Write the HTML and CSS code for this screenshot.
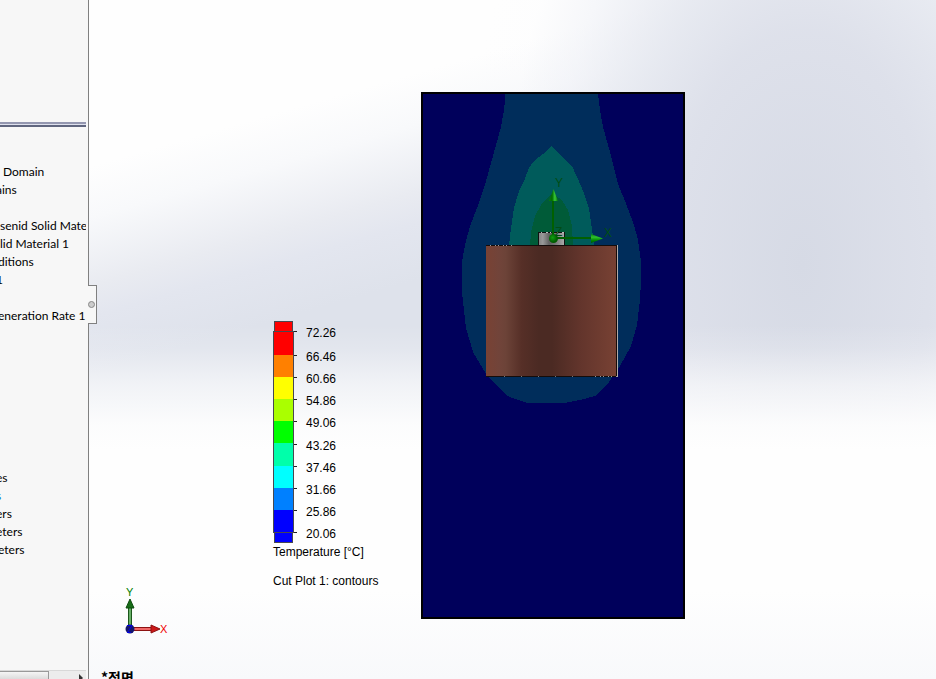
FILE: index.html
```html
<!DOCTYPE html>
<html lang="ko">
<head>
<meta charset="utf-8">
<title>Cut Plot 1</title>
<link rel="stylesheet" href="styles.css">
</head>
<body>
<aside class="panel">
  <div class="panel-top"></div>
  <div class="splitter"></div>
  <ul class="tree">
    <li class="after-space">Domain</li>
    <li class="cut">ains</li>
    <li></li>
    <li>senid Solid Mate</li>
    <li>lid Material 1</li>
    <li class="nudge">ditions</li>
    <li class="cut">1</li>
    <li></li>
    <li class="nudge">eneration Rate 1</li>
    <li></li><li></li><li></li><li></li><li></li><li></li><li></li><li></li>
    <li class="cut">es</li>
    <li class="cut link">s</li>
    <li class="cut">ers</li>
    <li class="cut">eters</li>
    <li class="nudge">eters</li>
  </ul>
  <div class="scrollbar">
    <div class="thumb"></div>
    <svg class="arrow" width="5" height="8" viewBox="0 0 5 8"><path d="M0 0L4 4L0 8Z" fill="#333"/></svg>
  </div>
</aside>
<main class="view">
  <button class="handle" type="button" aria-label="Collapse panel"><span class="dot"></span></button>

  <section class="legend">
    <div class="scale">
      <div class="bar">
        <div class="cap hot"></div>
        <div class="bands">
          <div class="band tall red"></div>
          <div class="band orange"></div>
          <div class="band yellow"></div>
          <div class="band lime"></div>
          <div class="band green"></div>
          <div class="band tall mint"></div>
          <div class="band cyan"></div>
          <div class="band azure"></div>
          <div class="band blue"></div>
        </div>
        <div class="cap cold"></div>
      </div>
      <ol class="values">
        <li class="first">72.26</li>
        <li>66.46</li>
        <li>60.66</li>
        <li>54.86</li>
        <li>49.06</li>
        <li class="spaced">43.26</li>
        <li>37.46</li>
        <li>31.66</li>
        <li>25.86</li>
        <li>20.06</li>
      </ol>
    </div>
    <p>Temperature [°C]</p>
    <p class="plot-name">Cut Plot 1: contours</p>
  </section>

  <svg class="plot" width="264" height="527" viewBox="421 92 264 527">
    <defs>
      <linearGradient id="copper">
        <stop offset="0" stop-color="#794234"/>
        <stop offset=".1" stop-color="#71443a"/>
        <stop offset=".15" stop-color="#6c4338"/>
        <stop offset=".27" stop-color="#562f27"/>
        <stop offset=".4" stop-color="#4b2a23"/>
        <stop offset=".5" stop-color="#4b2a23"/>
        <stop offset=".72" stop-color="#63352c"/>
        <stop offset="1" stop-color="#794234"/>
      </linearGradient>
      <linearGradient id="steel">
        <stop offset="0" stop-color="#858585"/>
        <stop offset=".15" stop-color="#999"/>
        <stop offset=".4" stop-color="#626262"/>
        <stop offset=".6" stop-color="#707070"/>
        <stop offset="1" stop-color="#aaa"/>
      </linearGradient>
      <linearGradient id="coneY">
        <stop offset="0" stop-color="#0a7d0a"/>
        <stop offset=".35" stop-color="#006a00"/>
        <stop offset=".65" stop-color="#38c838"/>
        <stop offset="1" stop-color="#087008"/>
      </linearGradient>
      <linearGradient id="coneX" x2="0" y2="1">
        <stop offset="0" stop-color="#078007"/>
        <stop offset=".35" stop-color="#30c030"/>
        <stop offset=".7" stop-color="#008a00"/>
        <stop offset="1" stop-color="#005500"/>
      </linearGradient>
      <radialGradient id="ball" cx=".4" cy=".4">
        <stop offset="0" stop-color="#10a010"/>
        <stop offset="1" stop-color="#005c00"/>
      </radialGradient>
    </defs>
    <rect x="422" y="93" width="262" height="525" fill="#00005b"/>
    <g shape-rendering="crispEdges">
      <path fill="#002d5b" d="M505.500 94H598L600 110L603 127L610 152L618 184L625 201L631 217L634 225L638 240L641 262V280L640 300L637 325L631 346L620 366L609 382L595 396L580 400L564 403H528L507 396L486 374L473 352L466 328L464 310L462 293V262L463 256L466 241L470 226L479 203L486 181L501 127L504 110Z"/>
      <path fill="#005b5b" d="M551.500 146L561 156L572 166L577 177L584 193L589 209L592 229L594 246H509L511 228L514 208L519 191L524 181L529 168L534 161L543 154Z"/>
      <path fill="#005b38" d="M530 246L531 232L535 216L541 205L548 197L553 194L562 200L568 210L572 226L573 246Z"/>
      <rect x="538" y="232" width="27" height="14" fill="#111"/>
      <rect x="539" y="233" width="25" height="13" fill="url(#steel)"/>
      <path d="M541 232.500H565" stroke="#bbb" stroke-dasharray="1 4 2 2 1 6"/>
      <rect x="486" y="245" width="132" height="132" fill="url(#copper)"/>
      <path d="M486 245.500H617M486 376.500H617M616.500 246V377" stroke="#150c0a"/>
      <path d="M617.500 245V377" stroke="#b0aaa8"/>
      <path d="M490 245.500H514M595 376.500H618" stroke="#999" stroke-dasharray="1 4 1 2"/>
      <path d="M504 376.500H576" stroke="#777" stroke-dasharray="1 16"/>
    </g>
    <rect x="422" y="93" width="262" height="525" fill="none" stroke="#000" stroke-width="2"/>
    <path d="M553 200V239M553 238H592" stroke="#006000" stroke-width="2"/>
    <path d="M553.500 189L558 201L549 201Z" fill="url(#coneY)"/>
    <path d="M603 238.500L591 234V243Z" fill="url(#coneX)"/>
    <circle cx="553.500" cy="238.500" r="4.500" fill="url(#ball)"/>
    <g class="axis-label" fill="#004d14">
      <text x="555" y="187">Y</text>
      <text x="604" y="237">X</text>
      <text x="555" y="236">Z</text>
    </g>
  </svg>

  <svg class="triad" width="50" height="54" viewBox="120 584 50 54">
    <rect x="128" y="606" width="4" height="22" fill="#1b571b"/>
    <rect x="129" y="606" width="2" height="22" fill="#68b068"/>
    <rect x="132" y="627" width="20" height="4" fill="#8c1212"/>
    <rect x="132" y="628" width="20" height="2" fill="#f06868"/>
    <path d="M130 599L134 608H126Z" fill="#176d17" stroke="#0d4a0d"/>
    <path d="M160 629L151 625V633Z" fill="#cc1818" stroke="#8c1212"/>
    <circle cx="130" cy="629" r="4.500" fill="#15156e"/>
    <path d="M127 625.500H132L127.500 632.500H131" fill="none" stroke="#0000e8"/>
    <g class="triad-label">
      <text x="126" y="596" fill="#008000">Y</text>
      <text x="160" y="633" fill="#f00000">X</text>
    </g>
  </svg>
  <div class="view-name">*정면</div>
</main>
</body>
</html>
```
FILE: styles.css
```css
* { box-sizing: border-box; }

body {
  margin: 0;
  height: 100vh;
  display: flex;
  overflow: hidden;
  color: #000;
  font: 12px/18px "Liberation Sans", Arial, sans-serif;
}

ul, ol, p { margin: 0; padding: 0; list-style: none; }

.panel {
  flex: 0 0 89px;
  display: flex;
  flex-direction: column;
  padding-right: 2px;
  border-right: 1px solid #808080;
  background: #f7f7f7;
  overflow: hidden;
}
.panel-top { flex: 0 0 122px; }
.splitter {
  flex: 0 0 5px;
  border-top: 2px solid #9497b0;
  border-bottom: 2px solid #60667f;
  background: #dfe1ee;
}
.tree {
  flex: 1;
  padding-top: 36px;
  overflow: hidden;
  font-family: Lato, "Open Sans", sans-serif;
}
.tree li { height: 18px; white-space: nowrap; }
.tree .after-space { padding-left: 3px; }
.tree .nudge { margin-left: -2px; }
.tree .cut { margin-left: -4px; }
.tree .link { color: #0078d0; }

.scrollbar {
  flex: 0 0 9px;
  display: flex;
  justify-content: space-between;
  background: #ececec;
  border-top: 1px solid #d8d8d8;
  overflow: hidden;
}
.thumb {
  width: 49px;
  border: 1px solid #999;
  border-width: 1px 1px 0 0;
  background: linear-gradient(#f5f5f5, #dcdcdc);
}
.arrow { margin: 3px 2px 0 0; }

.view {
  flex: 1;
  position: relative;
  background:
    linear-gradient(rgba(254, 254, 254, 0) 325px, rgba(254, 254, 254, .15) 348px, rgba(254, 254, 254, .6) 385px, rgba(254, 254, 254, .93) 425px, #fefefe 450px, #fefefe 590px, #f8f9fb 100%),
    radial-gradient(ellipse 340px 620px at 713px 265px, #d6dae5, rgba(221, 224, 234, .95) 38%, rgba(228, 231, 239, .85) 54%, rgba(238, 240, 246, .5) 74%, rgba(250, 250, 252, .15) 88%, rgba(254, 254, 254, 0)),
    linear-gradient(164deg, #fefefe 160px, #f8f9fb 210px, #e9ebf1 275px, #e3e6ef 305px, #dee2eb 360px);
}

.handle {
  position: absolute;
  left: -1px;
  top: 285px;
  width: 9px;
  height: 39px;
  padding: 0;
  display: flex;
  align-items: center;
  border: 1px solid #808080;
  border-left: 0;
  background: #f7f7f7;
}
.dot {
  width: 7px;
  height: 7px;
  border: 1px solid #888;
  border-radius: 50%;
  background: #ccc;
}

.legend { position: absolute; left: 184px; top: 321px; line-height: 16px; }
.scale { display: flex; height: 223px; }
.bar { width: 21px; }
.cap { height: 10px; margin: 0 1px; border: 1px solid #484850; }
.hot { background: #f00; border-bottom: 0; }
.cold { background: #00f; border-top: 0; }
.bands { border: 1px solid #484850; }
.band { height: 22px; }
.band.tall { height: 23px; }
.red { background: #f00; }
.orange { background: #ff8000; }
.yellow { background: #ff0; }
.lime { background: #af0; }
.green { background: #0f0; }
.mint { background: #00ffaa; }
.cyan { background: #0ff; }
.azure { background: #0080ff; }
.blue { background: #00f; }

.values { padding-top: 1px; }
.values li { height: 22px; display: flex; align-items: center; }
.values .first { margin-bottom: 2px; }
.values .spaced { margin-top: 1px; }
.values li::before {
  content: "";
  width: 3px;
  height: 1px;
  margin: 0 9px 3px 0;
  background: #222;
}
.plot-name { margin-top: 13px; }

.plot { position: absolute; left: 332px; top: 92px; }
.axis-label { font-size: 12px; }
.triad { position: absolute; left: 31px; top: 584px; }
.triad-label { font-size: 11px; }

.view-name {
  position: absolute;
  left: 12px;
  top: 667px;
  font: bold 14px/20px "Noto Sans CJK KR", sans-serif;
}
```
